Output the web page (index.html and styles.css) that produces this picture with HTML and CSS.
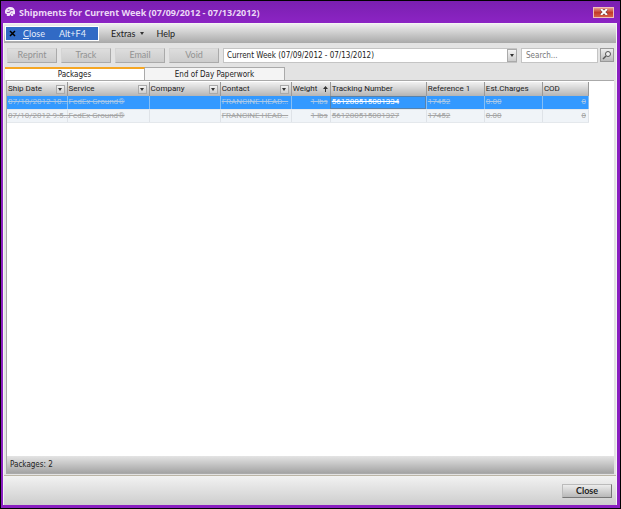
FILE: index.html
```html
<!DOCTYPE html>
<html lang="en">
<head>
    <meta charset="UTF-8">
    <meta name="viewport" content="width=device-width, initial-scale=1.0">
    <title>Shipments for Current Week</title>
    <link rel="stylesheet" href="styles.css">
</head>
<body>
    <div class="window">
        <header class="title-bar">
            <svg class="app-icon" viewBox="0 0 11 11" aria-hidden="true">
                <path d="M0 5C0 2 3 0 6 0s5 2 5 5v3H9v2H7L6 8l-1 2H2V8L0 7z" fill="#f3e6fa"/>
                <path d="M3 3h2M2 6h3l1-2h3M7 7h1" fill="none" stroke="#8a2bb5"/>
            </svg>
            <h1>Shipments for Current Week (07/09/2012 - 07/13/2012)</h1>
            <button class="window-close" type="button" aria-label="Close window">
                <svg viewBox="0 0 8 6" aria-hidden="true">
                    <path d="M1 0l6 6M7 0L1 6" stroke="#5c3236" stroke-width="3"/>
                    <path d="M1 0l6 6M7 0L1 6" stroke="#fff" stroke-width="2"/>
                </svg>
            </button>
        </header>

        <div class="client">
            <nav class="menu-bar">
                <button class="menu-close" type="button">
                    <svg viewBox="0 0 7 7" aria-hidden="true"><path d="M1 1l5 5M6 1L1 6" stroke="#000" stroke-width="1.5"/></svg>
                    <span><u>C</u>lose</span>
                    <span class="shortcut">Alt+F4</span>
                </button>
                <button class="menu-item" type="button">Extras <i class="arrow"></i></button>
                <button class="menu-item" type="button">Help</button>
            </nav>

            <div class="toolbar">
                <button class="tool" type="button" disabled>Reprint</button>
                <button class="tool" type="button" disabled>Track</button>
                <button class="tool" type="button" disabled>Email</button>
                <button class="tool" type="button" disabled>Void</button>
                <div class="period">
                    <select aria-label="Period">
                        <option>Current Week (07/09/2012 - 07/13/2012)</option>
                    </select>
                    <span class="drop"><i class="arrow"></i></span>
                </div>
                <input class="search" type="text" placeholder="Search..." aria-label="Search">
                <button class="search-button" type="button" aria-label="Search">
                    <svg viewBox="0 0 10 10" aria-hidden="true">
                        <circle cx="6" cy="4" r="2.5" fill="#eee" stroke="#555"/>
                        <path d="M4 6L1 9" stroke="#555" stroke-width="1.5"/>
                    </svg>
                </button>
            </div>

            <div class="tabs" role="tablist">
                <button class="tab active" type="button" role="tab" aria-selected="true">Packages</button>
                <button class="tab" type="button" role="tab" aria-selected="false">End of Day Paperwork</button>
            </div>

            <main class="panel">
                <div class="grid">
                    <table>
                        <colgroup>
                            <col class="c-date"><col class="c-service"><col class="c-name"><col class="c-name"><col class="c-weight"><col class="c-tracking"><col class="c-ref"><col class="c-ref"><col class="c-cod">
                        </colgroup>
                        <thead>
                            <tr>
                                <th><div>Ship Date <button type="button" aria-label="Filter ship date"><i class="arrow"></i></button></div></th>
                                <th><div>Service <button type="button" aria-label="Filter service"><i class="arrow"></i></button></div></th>
                                <th><div>Company <button type="button" aria-label="Filter company"><i class="arrow"></i></button></div></th>
                                <th><div>Contact <button type="button" aria-label="Filter contact"><i class="arrow"></i></button></div></th>
                                <th><div>Weight
                                    <svg class="sort" viewBox="0 0 5 6" aria-hidden="true"><path d="M0 3l2.500-3L5 3zM2 3h1v3H2z" fill="#333"/></svg></div></th>
                                <th>Tracking Number</th>
                                <th>Reference 1</th>
                                <th>Est.Charges</th>
                                <th>COD</th>
                            </tr>
                        </thead>
                        <tbody>
                            <tr class="selected">
                                <td>07/10/2012 10...</td>
                                <td>FedEx Ground®</td>
                                <td></td>
                                <td>FRANCINE HEAD...</td>
                                <td class="num">1 lbs</td>
                                <td class="current">561280515001334</td>
                                <td>17452</td>
                                <td>0.00</td>
                                <td class="num">0</td>
                            </tr>
                            <tr>
                                <td>07/10/2012 9:5...</td>
                                <td>FedEx Ground®</td>
                                <td></td>
                                <td>FRANCINE HEAD...</td>
                                <td class="num">1 lbs</td>
                                <td>561280515001327</td>
                                <td>17452</td>
                                <td>0.00</td>
                                <td class="num">0</td>
                            </tr>
                        </tbody>
                    </table>
                </div>
                <div class="status">Packages: 2</div>
            </main>

            <footer class="bottom-bar">
                <button class="close-button" type="button">Close</button>
            </footer>
        </div>
    </div>
</body>
</html>
```
FILE: styles.css
```css
* {
    box-sizing: border-box;
}

body {
    margin: 0;
    font-family: "DejaVu Sans Condensed", "Liberation Sans", sans-serif;
    font-size: 8px;
    color: #222;
}

button, input, select {
    font: inherit;
    color: inherit;
    margin: 0;
    padding: 0;
    border: 0;
    border-radius: 0;
    background: none;
}

.window {
    display: flex;
    flex-direction: column;
    height: 100vh;
    padding: 0 3px 3px 2px;
    border: 1px solid #000;
    background: #8a1fc0;
}

.title-bar {
    display: flex;
    align-items: center;
    height: 22px;
    margin: 0 -3px 0 -2px;
    padding: 0 6px 0 4px;
    background: linear-gradient(#7a1fb0, #8c24c4);
}

.app-icon {
    width: 10px;
    height: 10px;
    margin-right: 4px;
}

h1 {
    flex: 1;
    margin: 0;
    font: bold 9px "Noto Sans", sans-serif;
    color: #ecd8f6;
    white-space: nowrap;
}

.window-close {
    display: flex;
    align-items: center;
    justify-content: center;
    width: 21px;
    height: 11px;
    border: 1px solid #f0c0b8;
    background: linear-gradient(#e89a88, #c33c28 50%, #d86048);
}

.window-close svg {
    width: 8px;
    height: 6px;
}

.client {
    display: flex;
    flex: 1;
    flex-direction: column;
    border: 1px solid #f4f4f4;
    border-width: 1px 1px 0 1px;
    background: #e3e3e3;
}

.menu-bar {
    display: flex;
    align-items: center;
    height: 19px;
    background: linear-gradient(#eee, #a9a9a9);
    font: 9px Lato, sans-serif;
}

.menu-close {
    display: flex;
    align-items: center;
    width: 94px;
    height: 15px;
    margin-left: 1px;
    padding-left: 3px;
    border: 1px solid #fff;
    background: #316ac5;
    color: #e4edfa;
}

.menu-close svg {
    width: 7px;
    height: 7px;
    margin-right: 7px;
}

.shortcut {
    margin-left: 14px;
}

.menu-item {
    display: flex;
    align-items: center;
    gap: 5px;
    margin-left: 12px;
}

.arrow {
    border: 2px solid transparent;
    border-top: 3px solid #333;
    border-bottom: 0;
}

.toolbar {
    display: flex;
    align-items: center;
    gap: 4px;
    height: 24px;
    padding: 0 2px 0 3px;
}

.tool {
    width: 50px;
    height: 15px;
    border: 1px solid #bbb;
    border-color: #d4d4d4 #aaa #aaa #d4d4d4;
    background: linear-gradient(#ddd, #ccc);
    font: 9px Lato, sans-serif;
    line-height: 12px;
    color: #929292;
}

.period {
    position: relative;
    flex: 1;
    height: 15px;
}

.period select {
    width: 100%;
    height: 15px;
    padding-left: 3px;
    border: 1px solid #c4c4c4;
    background: #fff;
    appearance: none;
}

/* arrow drawn over the right end of the select */
.drop {
    position: absolute;
    top: 1px;
    right: 0;
    pointer-events: none;
}

.drop, th button {
    display: flex;
    align-items: center;
    justify-content: center;
    width: 10px;
    height: 13px;
    border: 1px solid #aaa;
    background: linear-gradient(#f4f4f4, #ccc);
}

.search {
    width: 77px;
    height: 15px;
    padding-left: 4px;
    border: 1px solid #c4c4c4;
    background: #fff;
}

.search::placeholder {
    color: #777;
}

.search-button {
    display: flex;
    align-items: center;
    justify-content: center;
    width: 14px;
    height: 14px;
    margin-left: -2px;
    border: 1px solid #999;
    background: linear-gradient(#eee, #bbb);
}

.search-button svg {
    width: 10px;
    height: 10px;
}

.tabs {
    display: flex;
    height: 13px;
    padding-left: 1px;
}

.tab {
    width: 140px;
    border: 1px solid #aaa;
    border-width: 1px 1px 0 0;
    background: #f4f4f4;
    line-height: 11px;
}

.tab.active {
    border-top: 2px solid #f5a623;
    background: #fff;
}

.panel {
    display: flex;
    flex: 1;
    flex-direction: column;
    margin: 0 2px 1px 2px;
    border: 1px solid #aaa;
    border-width: 1px 0 1px 1px;
    background: #fff;
}

.grid {
    flex: 1;
    padding-top: 1px;
}

table {
    width: 582px;
    border-collapse: collapse;
    table-layout: fixed;
    font-family: Roboto, "Liberation Sans", sans-serif;
    font-size: 8px;
}

.c-date { width: 60px; }
.c-service { width: 82px; }
.c-name { width: 71px; }
.c-weight { width: 39px; }
.c-tracking { width: 96px; }
.c-ref { width: 58px; }
.c-cod { width: 46px; }

th {
    height: 14px;
    padding: 0 2px 0 1px;
    border-right: 1px solid #999;
    background: linear-gradient(#f1f1f1, #b4b4b4);
    font-weight: normal;
    line-height: 12px;
    text-align: left;
    white-space: nowrap;
}

th div {
    display: flex;
    align-items: center;
    justify-content: space-between;
}

th button {
    width: 9px;
    height: 9px;
}

.sort {
    width: 5px;
    height: 6px;
}

td {
    height: 13px;
    padding: 0 0 0 1px;
    border-right: 1px solid #dfe3e8;
    border-bottom: 1px solid #e4e8ec;
    background: #f0f4f8;
    color: #a5a5a5;
    line-height: 12px;
    text-decoration: line-through;
    white-space: nowrap;
}

.selected td {
    border-right-color: #85bff6;
    background: #3399ff;
    color: #a9c8e8;
}

.selected .current {
    outline: 1px solid #5682ad;
    outline-offset: -1px;
    color: #fff;
}

td.num {
    padding-right: 2px;
    text-align: right;
}

.status {
    height: 17px;
    padding-left: 3px;
    background: linear-gradient(#e4e4e4, #a4a4a4);
    line-height: 17px;
}

.bottom-bar {
    display: flex;
    align-items: center;
    justify-content: flex-end;
    height: 30px;
    padding-right: 4px;
    border-top: 1px solid #bbb5a6;
    background: linear-gradient(#f2f2f2, #cdcdcd);
}

.close-button {
    width: 50px;
    height: 14px;
    border: 1px solid #888;
    border-color: #bbb #777 #777 #bbb;
    background: linear-gradient(#ececec, #b8b8b8);
    font: bold 9px Lato, sans-serif;
    line-height: 11px;
}
```
